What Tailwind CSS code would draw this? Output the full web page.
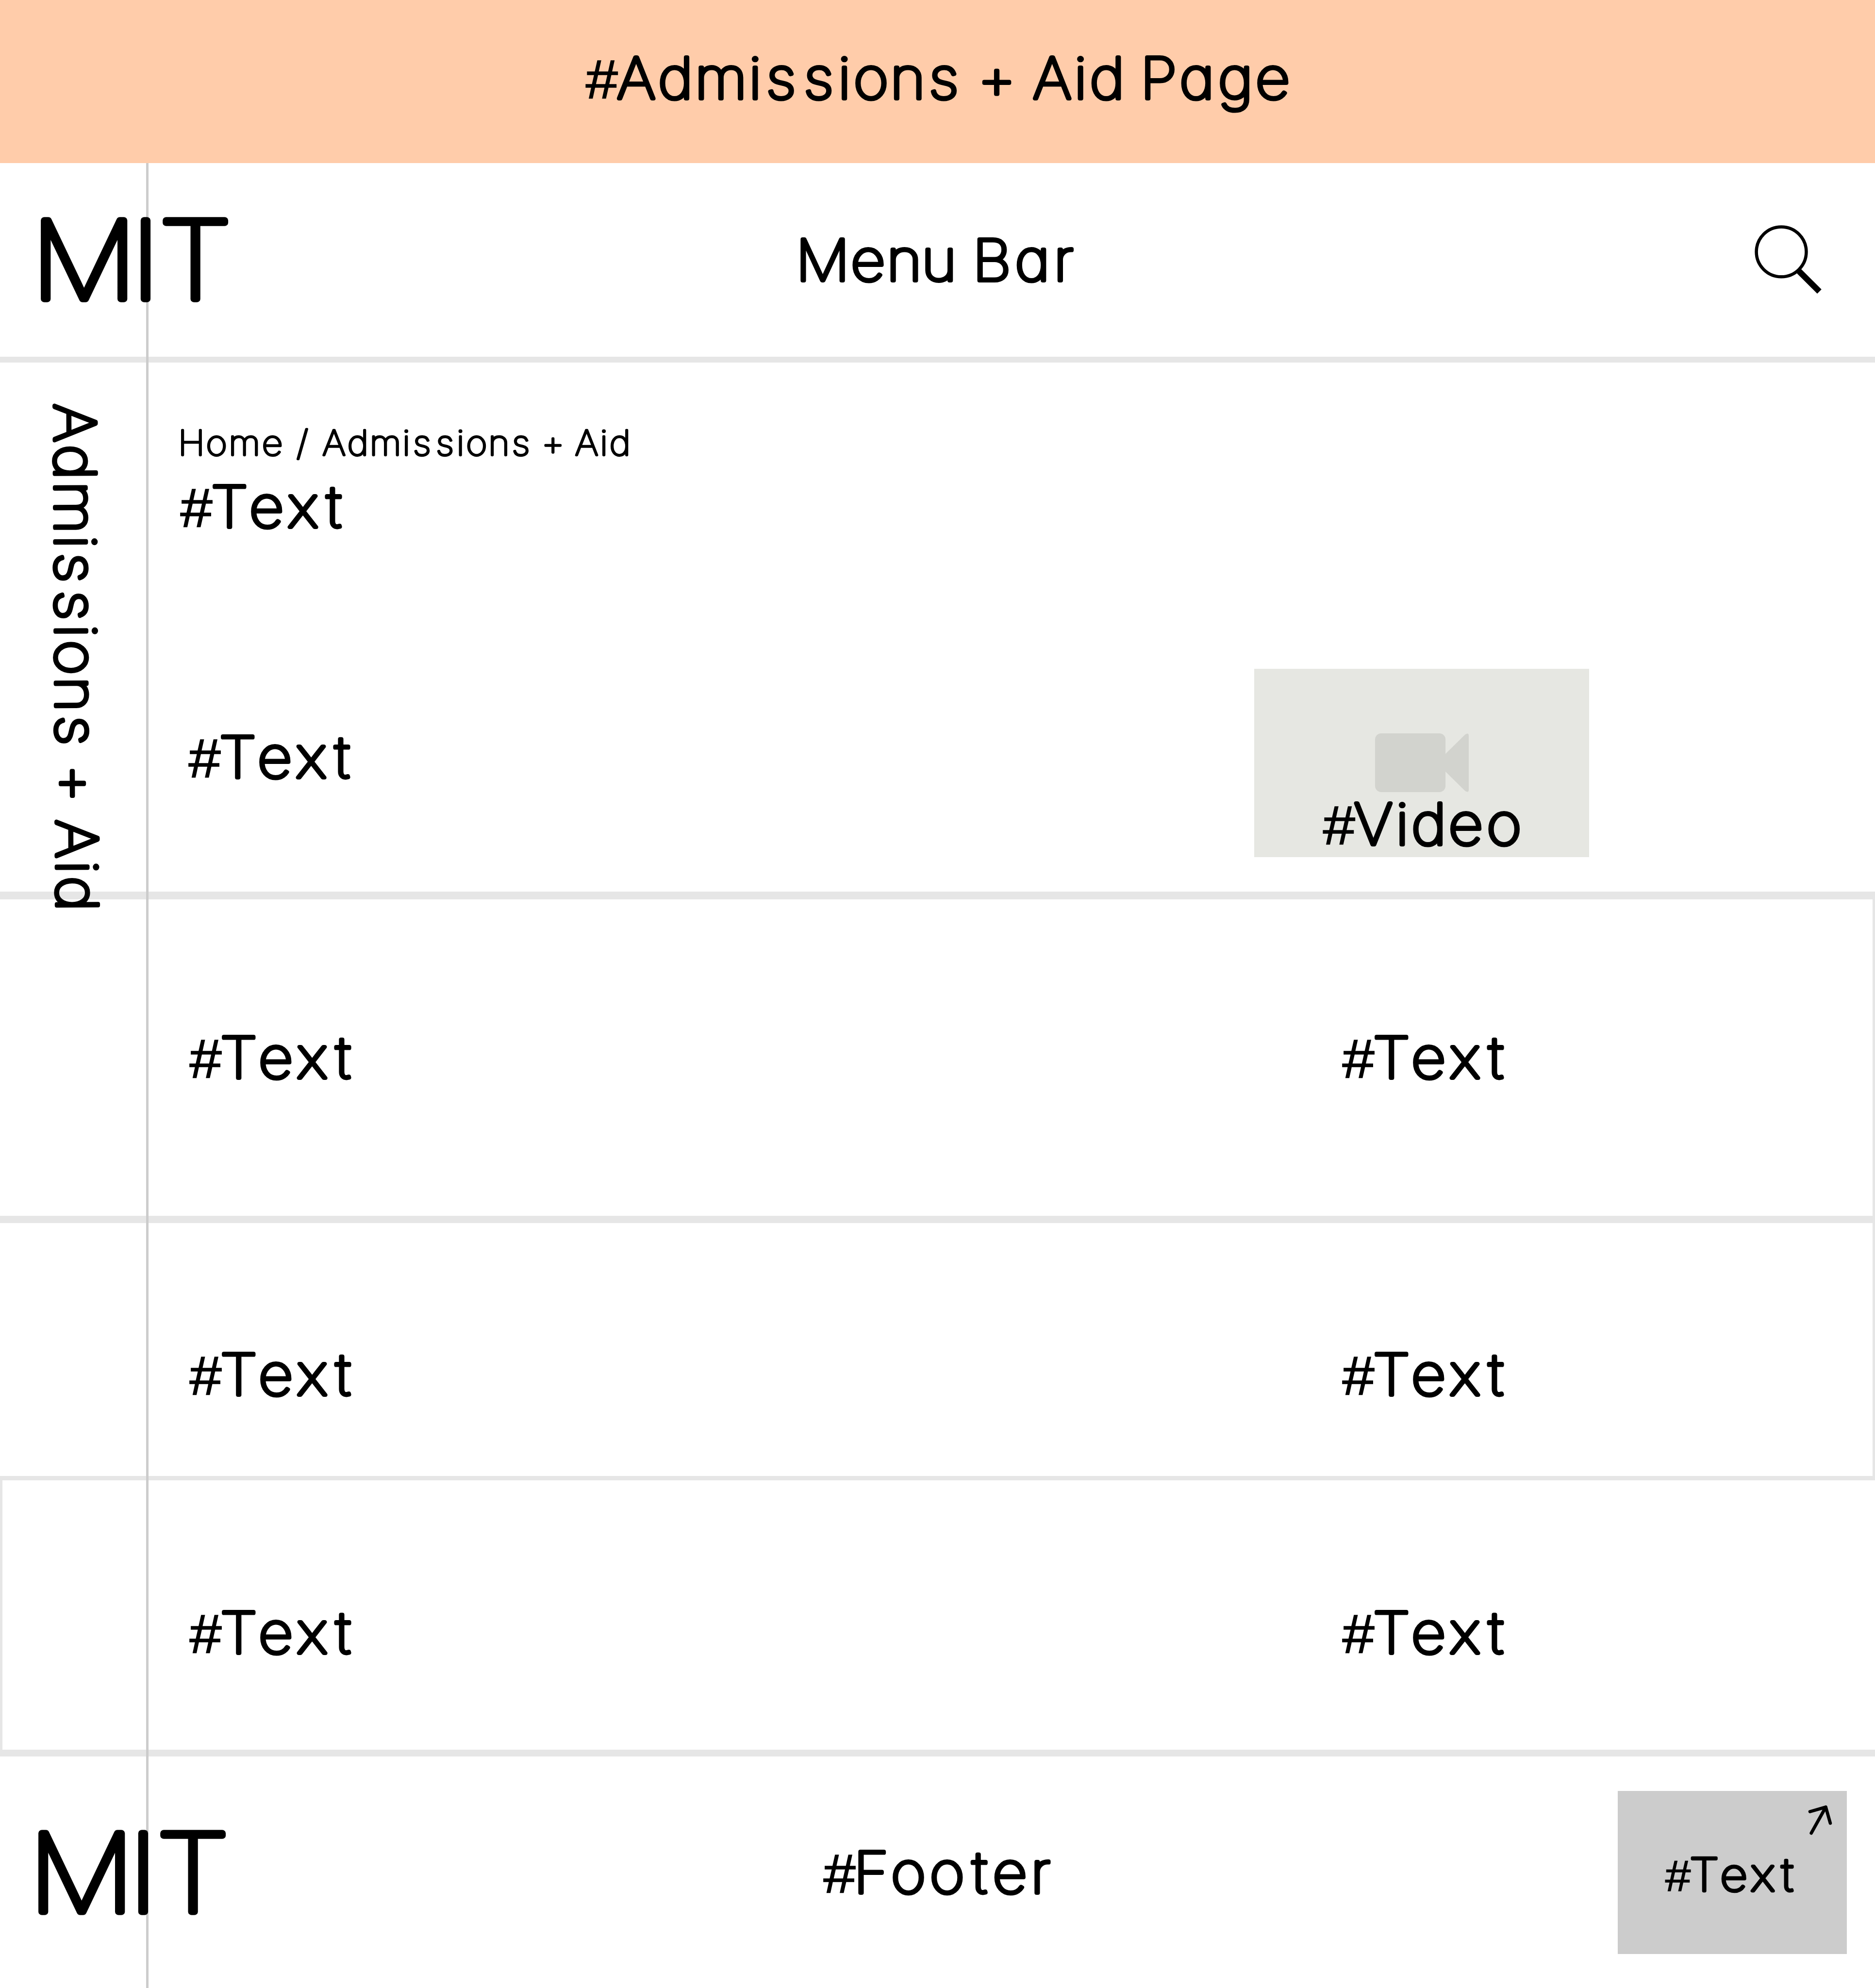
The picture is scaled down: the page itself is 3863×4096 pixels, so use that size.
<!DOCTYPE html>
<html lang="en">
<head>
<meta charset="utf-8">
<title>Admissions + Aid</title>
<script src="https://cdn.jsdelivr.net/npm/@tailwindcss/browser@4"></script>
</head>
<body class="bg-white text-black">
<div class="relative flex h-[4096px] w-[3863px] flex-col overflow-hidden font-['Inter',sans-serif] font-thin [font-feature-settings:'cv11'] [&_svg]:shrink-0 [&_svg]:overflow-visible [&_text]:fill-black [&_text]:stroke-black [&_text]:stroke-[9.5px] [&_text]:text-[140px] [&_text]:[stroke-linejoin:round] [&_tspan]:stroke-[2px] [&_tspan]:[stroke-linejoin:miter] [&_tspan]:font-['Liberation_Sans',sans-serif] [&_tspan]:text-[134px] [&_tspan]:font-normal">

  <!-- vertical guide -->
  <div class="absolute top-[336px] bottom-0 left-[301px] w-[5px] bg-[#cccccc]"></div>

  <!-- banner -->
  <header class="flex h-[336px] shrink-0 items-start justify-center bg-[#ffccaa] pt-[114px]">
    <svg class="h-[93px] w-[1451px]" viewBox="0 0 1728 111"><text transform="scale(1.06 1)" y="106.7" x="-1 71.4 166.7 252 377.1 417.7 504.9 583.9 620.2 705.2 795.1 880 908 990 1036.4 1131.9 1168 1250 1285.5 1376.5 1465.8 1552.6"><tspan>#</tspan>Admissions + Aid Page</text></svg>
  </header>

  <!-- menu bar -->
  <nav class="grid h-[411px] shrink-0 grid-cols-[1fr_auto_1fr] items-start border-b-[12px] border-[#e6e6e6] pr-[109px] pl-[84px]">
    <svg class="relative z-10 mt-[111px] h-[176px] w-[391px]" viewBox="0 0 466 209"><text class="!text-[265px] !stroke-[16px]" transform="scale(1.1 1)" y="201" x="-22 201 263.5">MIT</text></svg>
    <svg class="mt-[153px] ml-[24px] h-[93px] w-[567px]" viewBox="0 0 675 111"><text transform="scale(1.06 1)" y="106.7" x="-10.5 117 200.5 281.2 360 399.8 498.1 588">Menu Bar</text></svg>
    <svg class="mt-[128px] h-[141px] w-[139px] justify-self-end" viewBox="0 0 166 168" fill="none" stroke="#000">
      <circle cx="65.7" cy="65.3" r="61.4" stroke-width="7.8"/>
      <path d="M109 112.7 159.3 163" stroke-width="14.8"/>
    </svg>
  </nav>

  <!-- intro -->
  <section class="flex h-[1106px] shrink-0 border-b-[16px] border-[#e6e6e6]">
    <aside class="relative z-10 w-[301px] shrink-0 pt-[82px] pl-[108px]">
      <svg class="h-[1008px] w-[93px]" viewBox="0 0 111 1201"><text transform="translate(4.7 0) rotate(89.73) translate(-73.5 0) scale(1.06 1)" x="71.4 166.7 252 377.1 417.7 504.9 583.9 620.2 705.2 795.1 880 908 990 1036.4 1131.9 1168">Admissions + Aid</text></svg>
    </aside>
    <div class="flex flex-col pt-[137px] pl-[71px]">
      <svg class="ml-[1px] h-[56.5px] w-[923px]" viewBox="0 0 1814 111"><text class="!stroke-[8.5px]" transform="scale(1.06 1)" y="106.7" x="-11.8 94.9 181.5 308.8 400 440.7 500 539.7 635 720.3 845.4 886 973.2 1052.2 1088.5 1173.5 1263.4 1340 1376.3 1460 1504.7 1600.2 1636.3">Home / Admissions + Aid</text></svg>
      <svg class="mt-[56px] h-[93px] w-[334px]" viewBox="0 0 398 111"><text transform="scale(1.06 1)" y="106.7" x="-1 70 159 248.5 338.5"><tspan>#</tspan>Text</text></svg>
      <div class="mt-[288px] flex items-start pl-[17px]">
        <svg class="mt-[135px] h-[93px] w-[334px]" viewBox="0 0 398 111"><text transform="scale(1.06 1)" y="106.7" x="-1 70 159 248.5 338.5"><tspan>#</tspan>Text</text></svg>
        <div class="ml-[1861px] flex h-[388px] w-[690px] flex-col items-center bg-[#e6e7e2] pt-[133px]">
          <svg class="h-[121px] w-[193px]" viewBox="0 0 230 144" fill="#d2d3ce">
            <rect width="173" height="144" rx="15"/>
            <path d="M172 51 221 3q9-6 9 3v132q0 9-9 3L172 93Z"/>
          </svg>
          <svg class="mt-[19px] h-[93px] w-[406px]" viewBox="0 0 483 111"><text transform="scale(1.06 1)" y="106.7" x="-1 71 167.5 204 290 378.5"><tspan>#</tspan>Video</text></svg>
        </div>
      </div>
    </div>
  </section>

  <!-- content rows -->
  <section class="flex h-[667px] shrink-0 items-start gap-[2041px] border-r-[5px] border-b-[15px] border-[#e6e6e6] pt-[279px] pl-[391px]">
    <svg class="h-[93px] w-[334px]" viewBox="0 0 398 111"><text transform="scale(1.06 1)" y="106.7" x="-1 70 159 248.5 338.5"><tspan>#</tspan>Text</text></svg>
    <svg class="h-[93px] w-[334px]" viewBox="0 0 398 111"><text transform="scale(1.06 1)" y="106.7" x="-1 70 159 248.5 338.5"><tspan>#</tspan>Text</text></svg>
  </section>
  <section class="flex h-[530px] shrink-0 items-start gap-[2041px] border-r-[5px] border-b-[9px] border-[#e6e6e6] pt-[265px] pl-[391px]">
    <svg class="h-[93px] w-[334px]" viewBox="0 0 398 111"><text transform="scale(1.06 1)" y="106.7" x="-1 70 159 248.5 338.5"><tspan>#</tspan>Text</text></svg>
    <svg class="h-[93px] w-[334px]" viewBox="0 0 398 111"><text transform="scale(1.06 1)" y="106.7" x="-1 70 159 248.5 338.5"><tspan>#</tspan>Text</text></svg>
  </section>
  <section class="flex h-[569px] shrink-0 items-start gap-[2041px] border-b-[14px] border-l-[5px] border-[#e6e6e6] pt-[267px] pl-[386px]">
    <svg class="h-[93px] w-[334px]" viewBox="0 0 398 111"><text transform="scale(1.06 1)" y="106.7" x="-1 70 159 248.5 338.5"><tspan>#</tspan>Text</text></svg>
    <svg class="h-[93px] w-[334px]" viewBox="0 0 398 111"><text transform="scale(1.06 1)" y="106.7" x="-1 70 159 248.5 338.5"><tspan>#</tspan>Text</text></svg>
  </section>

  <!-- footer -->
  <footer class="grid h-[477px] shrink-0 grid-cols-[1fr_auto_1fr] items-start pr-[58px] pl-[79px]">
    <svg class="relative z-10 mt-[151px] h-[176px] w-[391px]" viewBox="0 0 466 209"><text class="!text-[265px] !stroke-[16px]" transform="scale(1.1 1)" y="201" x="-22 201 263.5">MIT</text></svg>
    <svg class="mt-[192px] mr-[21px] h-[93px] w-[469px]" viewBox="0 0 559 111"><text transform="scale(1.06 1)" y="106.7" x="-1 69 155.5 245.5 344.5 391.5 480"><tspan>#</tspan>Footer</text></svg>
    <div class="mt-[71px] flex h-[336px] w-[472px] flex-col justify-self-end bg-[#cccccc] pt-[30px] pr-[30px] pl-[98px]">
      <svg class="h-[61px] w-[50px] self-end" viewBox="0 0 59 73" fill="none" stroke="#000" stroke-width="8" stroke-linecap="round" stroke-linejoin="round">
        <path d="M4.4 15.1 43.3 3.9 54.5 43.6M43.3 3.9 7.6 68.1"/>
      </svg>
      <svg class="mt-[44px] h-[74px] w-[266px]" viewBox="0 0 398 111"><text transform="scale(1.06 1)" y="106.7" x="-1 70 159 248.5 338.5"><tspan>#</tspan>Text</text></svg>
    </div>
  </footer>
</div>
</body>
</html>
